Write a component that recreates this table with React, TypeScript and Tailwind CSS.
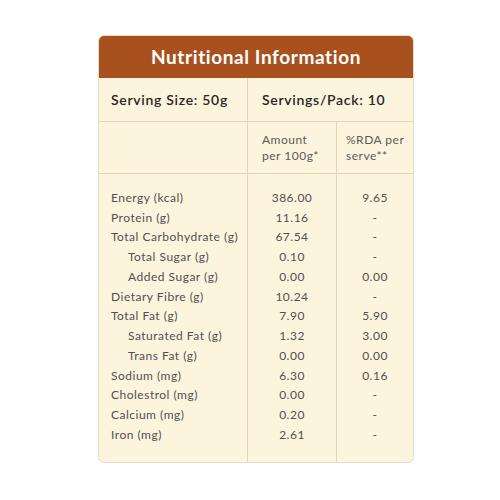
const rows: { name: string; amount: string; rda: string; indent?: boolean }[] = [
  { name: "Energy (kcal)", amount: "386.00", rda: "9.65" },
  { name: "Protein (g)", amount: "11.16", rda: "-" },
  { name: "Total Carbohydrate (g)", amount: "67.54", rda: "-" },
  { name: "Total Sugar (g)", amount: "0.10", rda: "-", indent: true },
  { name: "Added Sugar (g)", amount: "0.00", rda: "0.00", indent: true },
  { name: "Dietary Fibre (g)", amount: "10.24", rda: "-" },
  { name: "Total Fat (g)", amount: "7.90", rda: "5.90" },
  { name: "Saturated Fat (g)", amount: "1.32", rda: "3.00", indent: true },
  { name: "Trans Fat (g)", amount: "0.00", rda: "0.00", indent: true },
  { name: "Sodium (mg)", amount: "6.30", rda: "0.16" },
  { name: "Cholestrol (mg)", amount: "0.00", rda: "-" },
  { name: "Calcium (mg)", amount: "0.20", rda: "-" },
  { name: "Iron (mg)", amount: "2.61", rda: "-" },
];

export default function App() {
  return (
    <div className="w-[500px] h-[500px] bg-white pt-[35px] pl-[98px] font-['Lato',sans-serif]">
      <div className="w-[316px] h-[428px] rounded-[6px] border border-[#eadcbe] bg-[#fdf4dd] overflow-hidden flex flex-col text-[#4f4f4f]">
        <div className="h-[42px] bg-[#a8511f] flex items-center justify-center text-white font-bold text-[19px] tracking-[0.6px]">
          Nutritional Information
        </div>
        <div className="grid grid-cols-[148px_89px_77px] h-[44px] border-b border-[#e3d5b8] text-[14px] font-semibold tracking-[0.7px] text-[#262626]">
          <div className="flex items-center pl-[12px]">Serving Size: 50g</div>
          <div className="col-span-2 flex items-center pl-[14px] border-l border-[#e3d5b8]">Servings/Pack: 10</div>
        </div>
        <div className="grid grid-cols-[148px_89px_77px] h-[52px] border-b border-[#e3d5b8] text-[12px] leading-[16px] tracking-[0.5px] text-[#5a5a5a]">
          <div />
          <div className="flex items-center pl-[14px] border-l border-[#e3d5b8]">
            <span>Amount<br />per 100g*</span>
          </div>
          <div className="flex items-center pl-[9px] border-l border-[#e3d5b8]">
            <span>%RDA per<br />serve**</span>
          </div>
        </div>
        <div className="grid grid-cols-[148px_89px_77px] flex-1 text-[12px] tracking-[0.5px] text-[#505050]">
          <div className="pt-[14px]">
            {rows.map((r) => (
              <div key={r.name} className={`h-[19.75px] flex items-center ${r.indent ? "pl-[29px]" : "pl-[12px]"}`}>
                {r.name}
              </div>
            ))}
          </div>
          <div className="pt-[14px] border-l border-[#e3d5b8]">
            {rows.map((r) => (
              <div key={r.name} className="h-[19.75px] flex items-center justify-center">
                {r.amount}
              </div>
            ))}
          </div>
          <div className="pt-[14px] border-l border-[#e3d5b8]">
            {rows.map((r) => (
              <div key={r.name} className="h-[19.75px] flex items-center justify-center">
                {r.rda}
              </div>
            ))}
          </div>
        </div>
      </div>
    </div>
  );
}
